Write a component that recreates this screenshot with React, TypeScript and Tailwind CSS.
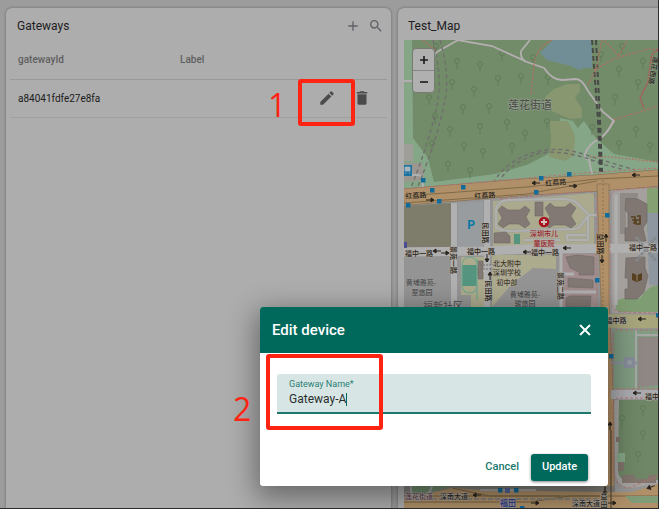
import React, { useState } from "react";

const uiFont = "font-['Roboto','Noto_Sans_CJK_SC',sans-serif]";

const trees: [number, number][] = [
  [457, 61], [480, 64], [502, 53], [452, 82], [498, 78], [521, 76], [474, 89], [429, 97],
  [463, 107], [489, 106], [435, 116], [450, 129], [480, 126], [507, 122], [432, 143], [464, 145],
  [512, 146], [483, 151], [525, 133], [448, 164], [470, 170], [436, 46], [548, 77],
  [619, 69], [643, 61], [638, 82], [615, 97], [547, 121], [592, 127], [622, 46],
  [533, 57], [601, 54], [619, 143], [636, 129], [650, 145],
];

const gardenTrees: [number, number][] = [[643, 408], [622, 418], [643, 433], [638, 454]];

const stops: [number, number][] = [
  [423, 180], [432, 190], [463, 187], [439, 201], [408, 205], [541, 178], [569, 174], [536, 192],
  [607, 215], [597, 280], [611, 356], [658, 315], [500, 490], [516, 490], [508, 508], [522, 508],
];

function Tree({ x, y }: { x: number; y: number }) {
  return <path d={`M${x - 2.5} ${y}a2.5 2.5 0 1 1 5 0a2.5 2.5 0 1 1 -5 0M${x} ${y + 3}v5`} fill="none" stroke="#607b58" />;
}

function Arrow({ x, y, turn = 0 }: { x: number; y: number; turn?: number }) {
  return (
    <path
      d="M-4 0H2M1 -2L4 0L1 2Z"
      transform={`translate(${x} ${y}) rotate(${turn})`}
      fill="#29231c"
      stroke="#29231c"
      strokeWidth="1"
    />
  );
}

function Label({
  x, y, children, size = 7, color = "#272420", turn = 0, halo = "#b0aaa0", bold = false,
}: {
  x: number; y: number; children: string; size?: number; color?: string; turn?: number; halo?: string; bold?: boolean;
}) {
  return (
    <text
      transform={`translate(${x} ${y}) rotate(${turn})`}
      textAnchor="middle"
      fontSize={size}
      fontWeight={bold ? 700 : 500}
      fill={color}
      stroke={halo}
      strokeWidth="1"
      paintOrder="stroke"
    >
      {children}
    </text>
  );
}

function CityMap() {
  return (
    <svg
      viewBox="404 40 254 468"
      preserveAspectRatio="xMinYMin slice"
      className="block h-full w-full font-['Noto_Sans_CJK_SC',sans-serif]"
      role="img"
      aria-label="Test_Map"
    >
      <rect x="404" y="40" width="254" height="468" fill="#949494" />

      {/* park */}
      <path d="M404 40H658V176L404 200Z" fill="#85a787" />
      <path d="M412 40H658V162L614 155L598 141L584 121L576 130L572 158L550 153L527 165L495 174L434 182L428 158L413 138Z" fill="#728c6a" />
      <path d="M560 118L573 121L579 130L598 140L614 154L658 162V176L540 182L500 174L527 165L550 154L562 158Z" fill="#85a787" />
      <path d="M545 97L554 89L567 84L580 84V91L575 98L582 109V118L570 119L545 108ZM550 121L568 121L575 136L574 155L565 161L549 157L551 141Z" fill="#88976f" />
      <path d="M540 53L553 40H592V68L583 68L579 70L571 66L547 60Z" fill="#718e97" />
      <rect x="404" y="144" width="9" height="17" fill="#a09e99" />
      <path d="M404 163H422L424 180L404 182Z" fill="#9c9691" />
      <path d="M406 175H419Q423 176 423 188" fill="none" stroke="#b0b0b0" strokeWidth="2" />
      {trees.map(([x, y]) => <Tree key={`${x}-${y}`} x={x} y={y} />)}

      <g fill="none" stroke="#b4aeb0" strokeWidth="1.8">
        <path d="M432 60L437 52L458 40L492 46L527 62L544 68Q552 80 562 80L576 79Q582 79 588 91L603 112L614 121L607 132M527 62Q520 60 521 51L530 40M404 81H413" />
        <path d="M614 120Q606 137 594 142Q584 150 585 158L589 160L592 174" />
      </g>
      <g fill="none" stroke="#706f6d" strokeWidth="1.4" strokeDasharray="4 3">
        <path d="M433 40Q442 75 438 100Q430 142 406 200M440 40Q450 75 445 100Q437 142 413 198" />
        <path d="M493 183Q508 158 540 151Q560 147 580 153L602 160L635 170M498 183Q510 162 540 153Q566 149 602 164L625 170" />
      </g>
      <path d="M592 40L598 120L600 172M596 40L600 120L602 172" fill="none" stroke="#484a47" strokeWidth="2" strokeDasharray="5 3" />
      <g fill="none" stroke="#b56d63" strokeWidth="1.2" strokeDasharray="2 1.5">
        <path d="M552 40Q536 47 534 65L531 95M602 40L596 70L588 85M594 70L616 58L648 49L658 49M605 41L619 56L627 40M614 120L658 106M590 157L612 157L658 162M423 40L436 51" />
      </g>
      <path d="M658 50Q650 54 651 61L648 82L640 98L644 108" fill="none" stroke="#a75f59" strokeWidth="2" strokeDasharray="2 1" />

      {/* blocks south of the park */}
      <path d="M404 206L451 203V247H404Z" fill="#7e7d6c" />
      <path d="M458 203L483 201V247H458Z" fill="#989c9f" />
      <path d="M493 201L594 193V244L493 247Z" fill="#abaa8f" />
      <path d="M612 188H658V313H612Z" fill="#a3a09d" />
      <path d="M492 255H556V269L533 268L512 284L492 307Z" fill="#adab8e" />
      <path d="M461 257H484V307H471V295H461Z" fill="#adab8d" />
      <path d="M563 254H596V307H563Z" fill="#a18d8e" />
      <path d="M647 188H658V232H647Z" fill="#85a174" />
      <path d="M647 213H658V285H649Z" fill="#8e969f" />
      <path d="M616 304Q617 296 640 298Q649 285 658 285V312H621Q616 312 616 306Z" fill="#7f9d73" />
      <path d="M620 193H638V197H626V234H620Z" fill="#908a87" />
      <path d="M626 198H636L647 204V222L643 228L646 241H625V228H628V213L625 210ZM626 258L645 257V268L648 276L644 292L637 299H625V289H628V278H625Z" fill="#807772" stroke="#6f6864" strokeWidth=".7" />

      <path d="M597 215H589L577 203Q572 199 562 199L508 200Q497 201 496 210V227Q500 231 510 231L575 229Q581 228 583 222L589 215M588 216V240H567V235H586M524 240H560" fill="none" stroke="#9b9e9e" strokeWidth="3" />
      <path d="M597 215H589L577 203Q572 199 562 199L508 200Q497 201 496 210V227Q500 231 510 231L575 229Q581 228 583 222L589 215M588 216V240H567V235H586M524 240H560" fill="none" stroke="#b0b0ae" strokeWidth="2" />
      <g fill="#827874" stroke="#716966" strokeWidth=".6">
        <path d="M498 210L502 206L508 210H520L525 206L530 210L526 217L530 224L525 228L519 224H509L503 228L498 224L502 218Z" />
        <path d="M535 202H543V216H535ZM545 208L550 203L555 207H565L570 203L576 208L571 216L576 224L571 228L565 225H554L549 228L545 224L550 217Z" />
        <path d="M494 233L506 232L510 236V243H494Z" />
        <path d="M566 257L577 255L594 257V275H579V272L570 268ZM568 278L593 280V288L568 287ZM566 298L570 296H591L590 307H566Z" />
        <path d="M478 261H483V279H478Z" />
      </g>
      <rect x="514" y="234" width="6" height="10" fill="#559580" />
      <rect x="462" y="265" width="15" height="21" fill="#559580" />
      <path d="M462 265Q463 257 470 257Q477 258 477 265V286Q476 293 470 293Q463 293 462 286ZM477 259V300" fill="none" stroke="#70a68e" strokeWidth="1.2" />

      {/* small roads */}
      <g fill="none" stroke="#b0b0b0">
        <path d="M454 203V307M487 200V307" strokeWidth="6" />
        <path d="M561 252V307M563 274H574M563 292H596M616 195V305" strokeWidth="3" />
        <path d="M404 252L484 251L530 249L658 248" strokeWidth="9" />
        <path d="M484 266H494M484 268V272" strokeWidth="2" />
      </g>
      <path d="M636 237L656 261M636 261L656 237" fill="none" stroke="#85898c" strokeWidth="3" strokeDasharray="3 1" />
      <path d="M480 265H494M480 269H494M478 268V275" fill="none" stroke="#75706d" strokeWidth="1" strokeDasharray="2 1" />

      {/* main roads */}
      <path d="M404 197L527 187L597 183L658 178" fill="none" stroke="#80694f" strokeWidth="17" />
      <path d="M404 197L527 187L597 183L658 178" fill="none" stroke="#af9069" strokeWidth="16" />
      <path d="M404 196L527 187L597 179L658 176M404 203L527 194L597 181" fill="none" stroke="#7c6643" strokeWidth=".9" />
      <path d="M597 184H609V300L614 410V508H601V300Z" fill="#b29067" stroke="#8b7354" strokeWidth=".8" />
      <path d="M603 180V508" stroke="#8a7354" strokeDasharray="2 2" />
      <path d="M404 189L527 178L585 173L658 168M500 199L590 191L597 198V307M609 202Q610 190 619 190L658 187M610 225V300Q612 312 622 312L658 313" fill="none" stroke="#b4756f" strokeWidth="1" strokeDasharray="3 2" />

      {/* south-east */}
      <path d="M608 314L658 315V328H608Z" fill="#a6a57b" />
      <path d="M613 329H658V389H613Z" fill="#819c83" />
      <path d="M638 337H658V385L638 388Z" fill="#8f8784" />
      <path d="M636 329V388M636 335H658" fill="none" stroke="#a5a7a5" strokeWidth="2" />
      <path d="M611 363H638" stroke="#8c929c" strokeWidth="3" />
      <path d="M626 359H633V366H626Z" fill="none" stroke="#858c98" strokeWidth="4" />
      <path d="M628 361H631V364H628Z" fill="none" stroke="#a0a4a8" />
      <path d="M611 390H658V399H611Z" fill="#aaabb0" />
      <path d="M614 400H658V484L630 488Q615 486 615 470Z" fill="#a3a2a0" />
      <path d="M619 400H658V480H634Q619 484 618 470Z" fill="#6f8766" />
      <path d="M617 453H625V462H617Z" fill="#85a787" />
      <path d="M622 475H635V479H648V475H656V483H622ZM616 437H620V442H616ZM618 462H624V471H618Z" fill="#81756d" />
      <path d="M618 330Q613 330 613 341V389H658M658 330H618M658 398L618 398Q613 399 613 410V470Q615 488 629 488L658 476" fill="none" stroke="#b4716c" strokeWidth="1" strokeDasharray="3 2" />
      {gardenTrees.map(([x, y]) => <Tree key={`${x}-${y}`} x={x} y={y} />)}

      {/* southern avenue */}
      <path d="M404 486H615V508H404Z" fill="#817e77" />
      <path d="M411 486H450L425 494H411Z" fill="#6d8a6b" />
      <path d="M404 496Q430 494 452 488L480 490L600 492L632 492L658 484V508H404Z" fill="#af9069" />
      <path d="M404 502H530L570 496H658M452 488L490 496H600M404 496H560" fill="none" stroke="#7b6543" strokeWidth="1" />
      <path d="M404 499H600" stroke="#85817c" strokeWidth="2" strokeDasharray="5 2" />
      <path d="M625 496H658V503H632Z" fill="#7f9b77" />
      <path d="M480 490H536M411 486Q410 500 420 500Q430 495 432 486" fill="none" stroke="#a3a3a7" strokeWidth="2" />
      <path d="M605 486V508M611 430V508" stroke="#66533e" strokeWidth="1.5" />

      <g fill="#126c9a">
        {stops.map(([x, y]) => (
          <rect key={`${x}-${y}`} x={x - 2} y={y - 2} width="4.5" height="4.5" />
        ))}
      </g>
      <path d="M404 165H412V176H404Z" fill="#1b73a2" />
      <path d="M405 167H410V171H405ZM405 173H406.500M409 173H410.500" fill="#a5b6bd" stroke="#a5b6bd" strokeWidth=".8" />
      <rect x="505" y="488" width="5" height="5" fill="#5565a0" />
      <path d="M404 242H407V248H404Z" fill="#4a4c8e" />
      <circle cx="544" cy="222" r="5.300" fill="#a5141e" />
      <path d="M544 219V225M541 222H547" stroke="#d8c4c4" strokeWidth="1.8" />
      <path d="M631 217H635V223H633M632 220H635M637 216H640V224H636V220H640" fill="none" stroke="#57401f" strokeWidth="1.6" />
      <path d="M632 273L637 275L642 273V280L637 282L632 280Z" fill="#57401f" />
      <path d="M637 274V281" stroke="#94826c" />

      <Arrow x={430} y={200} /><Arrow x={536} y={183} turn={180} /><Arrow x={573} y={186} />
      <Arrow x={636} y={175} turn={180} /><Arrow x={437} y={251} turn={180} /><Arrow x={445} y={253} />
      <Arrow x={487} y={258} turn={90} /><Arrow x={490} y={276} turn={270} /><Arrow x={567} y={248} turn={180} />
      <Arrow x={527} y={252} turn={180} /><Arrow x={606} y={238} turn={270} /><Arrow x={602} y={259} turn={90} />
      <Arrow x={642} y={319} turn={180} /><Arrow x={637} y={393} turn={180} /><Arrow x={610} y={426} turn={270} />
      <Arrow x={651} y={487} turn={160} /><Arrow x={477} y={495} turn={180} /><Arrow x={535} y={503} />
      <Arrow x={605} y={491} turn={90} /><Arrow x={612} y={503} />

      <Label x={530} y={109} size={11} color="#4d514b" halo="#98a391">莲花街道</Label>
      <Label x={651} y={70} turn={100} halo="#8a9a82">莲花西路</Label>
      <Label x={416} y={198} turn={-3} halo="#af9069">红荔路</Label>
      <Label x={485} y={198} turn={-3} halo="#af9069">红荔路</Label>
      <Label x={556} y={185} turn={-5} halo="#af9069">红荔路</Label>
      <Label x={419} y={256}>福中一路</Label>
      <Label x={481} y={254}>福中一路</Label>
      <Label x={545} y={255}>福中一路</Label>
      <Label x={643} y={250}>福中一路</Label>
      <Label x={451} y={260} turn={90}>景苑一路</Label>
      <Label x={483} y={233} turn={90}>民田路</Label>
      <Label x={486} y={291} turn={90}>民田路</Label>
      <Label x={598} y={244} turn={90} halo="#b29067">益田路</Label>
      <Label x={558} y={286} turn={90}>景苑二路</Label>
      <Label x={471} y={229} size={12} color="#0877a4" halo="#989c9f" bold>P</Label>
      <Label x={544} y={236} color="#99242c">深圳市儿</Label>
      <Label x={544} y={246} color="#99242c">童医院</Label>
      <Label x={507} y={266} color="#3f3b23">北大附中</Label>
      <Label x={507} y={275} color="#3f3b23">深圳学校</Label>
      <Label x={507} y={285} color="#3f3b23">初中部</Label>
      <Label x={421} y={285} color="#4c4c4c" halo="#9c9c9c">黄埔雅苑-</Label>
      <Label x={422} y={295} color="#4c4c4c" halo="#9c9c9c">翠悠园</Label>
      <Label x={525} y={297} color="#4c4c4c" halo="#9c9c9c">黄埔雅苑-</Label>
      <Label x={525} y={306} color="#4c4c4c" halo="#9c9c9c">骏悠园</Label>
      <Label x={443} y={310} size={10} color="#5a5a5a" halo="#9c9c9c">福新社区</Label>
      <Label x={616} y={323}>福中路</Label>
      <Label x={652} y={399}>福中</Label>
      <Label x={419} y={499} color="#5b3c50">莲花街道</Label>
      <Label x={454} y={499}>深南大道</Label>
      <Label x={586} y={506}>深南大道</Label>
      <Label x={508} y={506} size={8} color="#323a89" bold>福田</Label>
      <Label x={604} y={499}>益</Label>
      <Label x={604} y={507}>田</Label>
    </svg>
  );
}

function MaterialIcon({ d, className }: { d: string; className: string }) {
  return (
    <svg viewBox="0 0 24 24" fill="currentColor" className={className} aria-hidden="true">
      <path d={d} />
    </svg>
  );
}

export default function App() {
  const [name, setName] = useState("Gateway-A");
  return (
    <div className={`relative h-screen overflow-hidden border-r border-b border-[#2b2a2e] bg-[#9c9c9c] text-[#202020] ${uiFont}`}>
      <main className="grid h-full grid-cols-[385fr_260fr] gap-[7px] pt-2 pl-1.5">
        <section className="min-w-0 rounded-t-md bg-[#adadad] px-1 shadow-[0_0_3px_rgba(0,0,0,0.35)]">
          <header className="flex h-9 items-center pr-[3px] pl-[7px]">
            <h2 className="flex-1 text-[12px]">Gateways</h2>
            <div className="flex gap-[7px] text-[#5f6266]">
              <button aria-label="Add device">
                <MaterialIcon className="size-4" d="M19 13h-6v6h-2v-6H5v-2h6V5h2v6h6v2z" />
              </button>
              <button aria-label="Search">
                <MaterialIcon className="size-4" d="M15.500 14h-.79l-.28-.27A6.471 6.471 0 0 0 16 9.500 6.500 6.500 0 1 0 9.500 16c1.610 0 3.090-.59 4.230-1.570l.27.28v.79l5 4.990L20.490 19l-4.990-5zm-6 0C7.010 14 5 11.990 5 9.500S7.010 5 9.500 5 14 7.010 14 9.500 11.990 14 9.500 14z" />
              </button>
            </div>
          </header>
          <table className="w-full table-fixed border-collapse text-left text-[10px]">
            <thead>
              <tr className="h-[35px] border-b border-[#999999] text-[#606060]">
                <th className="w-[162px] pb-1 pl-2 font-medium">gatewayId</th>
                <th className="pb-1 pl-2 font-medium">Label</th>
                <td className="w-24" />
              </tr>
            </thead>
            <tbody>
              <tr className="h-[38px] border-b border-[#a0a0a0]">
                <td className="pl-2">a84041fdfe27e8fa</td>
                <td />
                <td className="pr-4">
                  <div className="flex justify-end gap-[17px] text-[#4b4b4b]">
                    <button aria-label="Edit device">
                      <MaterialIcon className="size-[18px]" d="M3 17.250V21h3.750L17.810 9.940l-3.750-3.750L3 17.250zM20.710 7.040a.996.996 0 0 0 0-1.410l-2.340-2.340a.996.996 0 0 0-1.410 0l-1.830 1.830 3.750 3.750 1.830-1.830z" />
                    </button>
                    <button aria-label="Delete device">
                      <MaterialIcon className="size-[18px]" d="M6 19c0 1.100.9 2 2 2h8c1.100 0 2-.9 2-2V7H6v12zM19 4h-3.500l-1-1h-5l-1 1H5v2h14V4z" />
                    </button>
                  </div>
                </td>
              </tr>
            </tbody>
          </table>
        </section>

        <section className="flex min-h-0 min-w-0 flex-col rounded-tl-md bg-[#adadad] pl-1.5 shadow-[0_0_3px_rgba(0,0,0,0.35)]">
          <header className="flex h-8 shrink-0 items-center pt-1 pl-1">
            <h2 className="text-[12px]">Test_Map</h2>
          </header>
          <div className="relative min-h-0 flex-1 overflow-hidden">
            <CityMap />
            <div className="absolute top-2 left-2 flex w-[23px] flex-col rounded-sm border border-[#767b72] bg-[#b0b0b0] text-[#1b1b1b]">
              <button aria-label="Zoom in" className="flex h-[22px] items-center justify-center border-b border-[#858585]">
                <svg viewBox="0 0 10 10" className="size-2.5" stroke="currentColor" strokeWidth="1.6" aria-hidden="true"><path d="M5 1V9M1 5H9" /></svg>
              </button>
              <button aria-label="Zoom out" className="flex h-[21px] items-center justify-center">
                <svg viewBox="0 0 10 10" className="size-2.5" stroke="currentColor" strokeWidth="1.6" aria-hidden="true"><path d="M1 5H9" /></svg>
              </button>
            </div>
          </div>
        </section>
      </main>

      <form
        role="dialog"
        aria-labelledby="dialog-title"
        onSubmit={(e: React.FormEvent) => e.preventDefault()}
        className="absolute top-[307px] left-[260px] w-[348px] rounded-[3px] bg-white shadow-[0_8px_28px_4px_rgba(0,0,0,0.4)]"
      >
        <header className="flex h-[46px] items-center justify-between rounded-t-[3px] bg-[#00695c] pr-3.5 pl-3 text-white">
          <h1 id="dialog-title" className="text-[15px] font-medium">Edit device</h1>
          <button type="button" aria-label="Close">
            <MaterialIcon className="size-[18px] stroke-white" d="M19 6.410L17.590 5 12 10.590 6.410 5 5 6.410 10.590 12 5 17.590 6.410 19 12 13.410 17.590 19 19 17.590 13.410 12z" />
          </button>
        </header>
        <div className="px-[17px] pt-[21px]">
          <div className="flex h-10 flex-col rounded-t-[3px] border-b-2 border-[#1f786d] bg-[#d7e6e4] px-3 pt-1">
            <label htmlFor="gateway-name" className="text-[9px] leading-[13px] text-[#2c7f74]">Gateway Name*</label>
            <div className="flex h-4 items-center">
              <input
                id="gateway-name"
                value={name}
                onChange={(e) => setName(e.target.value)}
                className="field-sizing-content bg-transparent text-[12px] leading-4 text-[#292f2e] outline-none"
              />
              <span className="h-[13px] w-px bg-[#00695c]" />
            </div>
          </div>
        </div>
        <footer className="flex justify-end pt-10 pr-5 pb-[5px] text-[11px] font-medium">
          <button type="button" className="h-[27px] px-3 text-[#1b7a6e]">Cancel</button>
          <button type="submit" className="h-[27px] w-[57px] rounded-[3px] bg-[#00695c] text-white shadow-[0_1px_3px_rgba(0,0,0,0.5)]">Update</button>
        </footer>
      </form>

      <div className="pointer-events-none absolute top-[79px] left-[298px] h-[47px] w-[57px] rounded-[3px] border-4 border-[#ff2312]" />
      <div className="pointer-events-none absolute top-[354px] left-[266px] h-[76px] w-[117px] rounded-[3px] border-4 border-[#ff2312]" />
      <span className="absolute top-[89px] left-[268px] font-['Open_Sans',sans-serif] text-[32px] leading-8 text-[#ff2312]">1</span>
      <span className="absolute top-[393px] left-[233px] font-['Open_Sans',sans-serif] text-[32px] leading-8 text-[#ff2312]">2</span>
    </div>
  );
}
